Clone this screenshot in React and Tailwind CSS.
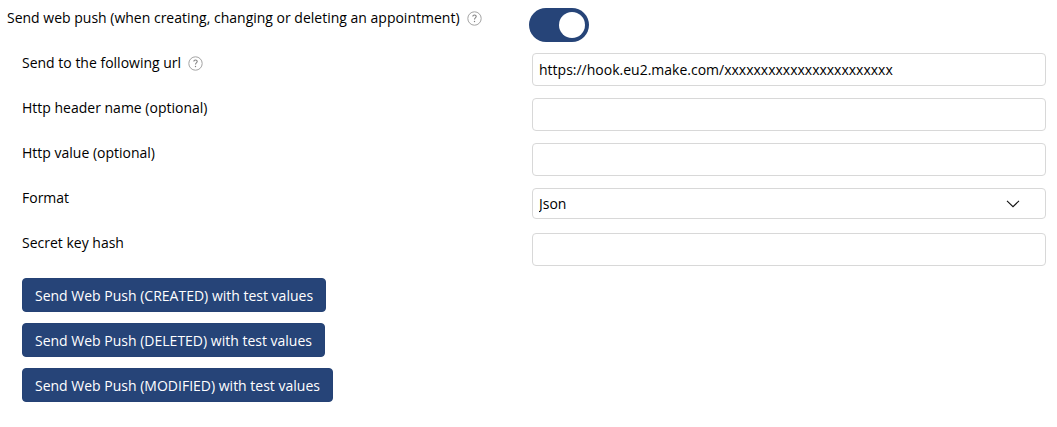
function Help({ label }) {
  return (
    <button type="button" aria-label={label} className="flex">
      <svg width="15" height="15" viewBox="0 0 15 15" fill="none">
        <circle cx="7.5" cy="7.5" r="6.7" stroke="#a3a3a3" />
        <path d="M5.8 5.6c0-1 .7-1.6 1.7-1.6s1.7.6 1.7 1.5c0 1.3-1.7 1.4-1.7 2.9" stroke="#808080" strokeWidth="1.1" />
        <circle cx="7.5" cy="10.5" r="0.7" fill="#808080" />
      </svg>
    </button>
  );
}

const field = "block h-[33px] w-full rounded border border-[#d8d8d8] bg-white px-1.5 text-sm text-black outline-none";

function Row({ id, label, help, children }) {
  return (
    <div className="flex h-[45px] items-start pr-[11px]">
      <div className="flex w-1/2 shrink-0 items-center gap-[7px] pl-[22px]">
        <label htmlFor={id} className="leading-5">{label}</label>
        {help && <Help label={help} />}
      </div>
      <div className="min-w-0 grow pl-[9px]">{children}</div>
    </div>
  );
}

function TestButton({ kind }) {
  return (
    <button type="button" className="h-[34px] rounded border border-[#254275] bg-[#264478] px-3 pt-0.5 text-sm text-white">
      Send Web Push ({kind}) with test values
    </button>
  );
}

export default function App() {
  return (
    <form className="bg-white pb-6 font-['Open_Sans','Noto_Sans',sans-serif] text-sm text-black">
      <div className="flex h-[53px] items-start pt-2">
        <div className="flex w-1/2 shrink-0 items-center gap-[7px] pl-[7px]">
          <label htmlFor="push" className="leading-5">
            Send web push (when creating, changing or deleting an appointment)
          </label>
          <Help label="About web push" />
        </div>
        <label className="flex h-[34px] w-[60px] items-center justify-end rounded-full bg-[#264478] px-1 has-[:not(:checked)]:justify-start">
          <input id="push" type="checkbox" role="switch" defaultChecked className="size-[26px] appearance-none rounded-full bg-white" />
        </label>
      </div>
      <Row id="url" label="Send to the following url" help="About the url">
        <input id="url" type="text" defaultValue="https://hook.eu2.make.com/xxxxxxxxxxxxxxxxxxxxxxx" className={field} />
      </Row>
      <Row id="header" label="Http header name (optional)">
        <input id="header" type="text" className={field} />
      </Row>
      <Row id="value" label="Http value (optional)">
        <input id="value" type="text" className={field} />
      </Row>
      <Row id="format" label="Format">
        <div className="relative">
          <select id="format" defaultValue="Json" className="block h-[31px] w-full appearance-none rounded border border-[#d8d8d8] bg-white px-1.5 text-sm text-black outline-none">
            <option>Json</option>
            <option>Xml</option>
          </select>
          <svg className="pointer-events-none absolute top-3 right-[25px]" width="16" height="8" viewBox="0 0 16 8" fill="none" stroke="#111" strokeWidth="1.1">
            <path d="M2 0.9L8 6.7L14 0.9" />
          </svg>
        </div>
      </Row>
      <Row id="secret" label="Secret key hash">
        <input id="secret" type="text" className={field} />
      </Row>
      <div className="flex flex-col items-start gap-[11px] pl-[22px]">
        <TestButton kind="CREATED" />
        <TestButton kind="DELETED" />
        <TestButton kind="MODIFIED" />
      </div>
    </form>
  );
}
